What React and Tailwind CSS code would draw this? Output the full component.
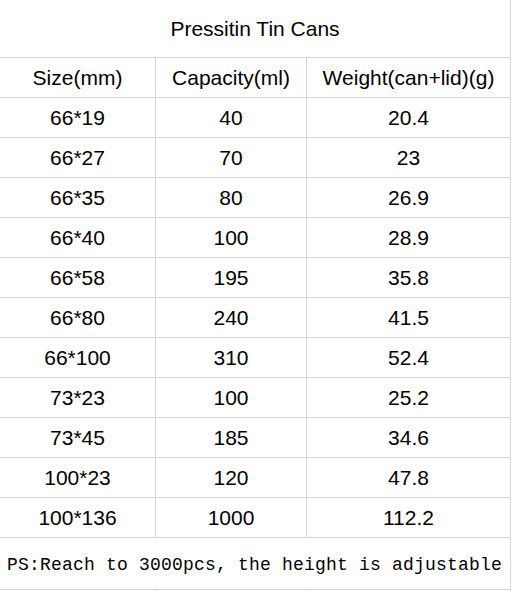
const rows = [
  ["66*19", "40", "20.4"],
  ["66*27", "70", "23"],
  ["66*35", "80", "26.9"],
  ["66*40", "100", "28.9"],
  ["66*58", "195", "35.8"],
  ["66*80", "240", "41.5"],
  ["66*100", "310", "52.4"],
  ["73*23", "100", "25.2"],
  ["73*45", "185", "34.6"],
  ["100*23", "120", "47.8"],
  ["100*136", "1000", "112.2"],
];

const Row = ({ cells }) => (
  <div className="flex h-[40px] border-b border-[#d4d4d4]">
    <div className="w-[156px] flex items-center justify-center border-r border-[#d4d4d4]">
      {cells[0]}
    </div>
    <div className="w-[151px] flex items-center justify-center border-r border-[#d4d4d4]">
      {cells[1]}
    </div>
    <div className="w-[204px] flex items-center justify-center border-r border-[#d4d4d4]">
      {cells[2]}
    </div>
  </div>
);

export default function App() {
  return (
    <div className="w-[512px] h-[591px] overflow-hidden bg-white text-black text-[21px] font-['Liberation_Sans',Arial,sans-serif]">
      <div className="w-[511px]">
        {/* Title */}
        <div className="h-[58px] flex items-center justify-center border-b border-r border-[#d4d4d4]">
          Pressitin Tin Cans
        </div>

        <Row cells={["Size(mm)", "Capacity(ml)", "Weight(can+lid)(g)"]} />
        {rows.map((r, i) => (
          <Row key={i} cells={r} />
        ))}

        {/* Note */}
        <div className="h-[52px] flex items-center pl-[7px] pt-[3px] border-b border-r border-[#d4d4d4] text-[18px] tracking-[0.2px] font-['Liberation_Mono','Courier_New',monospace]">
          PS:Reach to 3000pcs, the height is adjustable
        </div>

        <div className="flex h-[2px]">
          <div className="w-[156px] border-r border-[#d4d4d4]" />
          <div className="w-[151px] border-r border-[#d4d4d4]" />
          <div className="w-[204px] border-r border-[#d4d4d4]" />
        </div>
      </div>
    </div>
  );
}
